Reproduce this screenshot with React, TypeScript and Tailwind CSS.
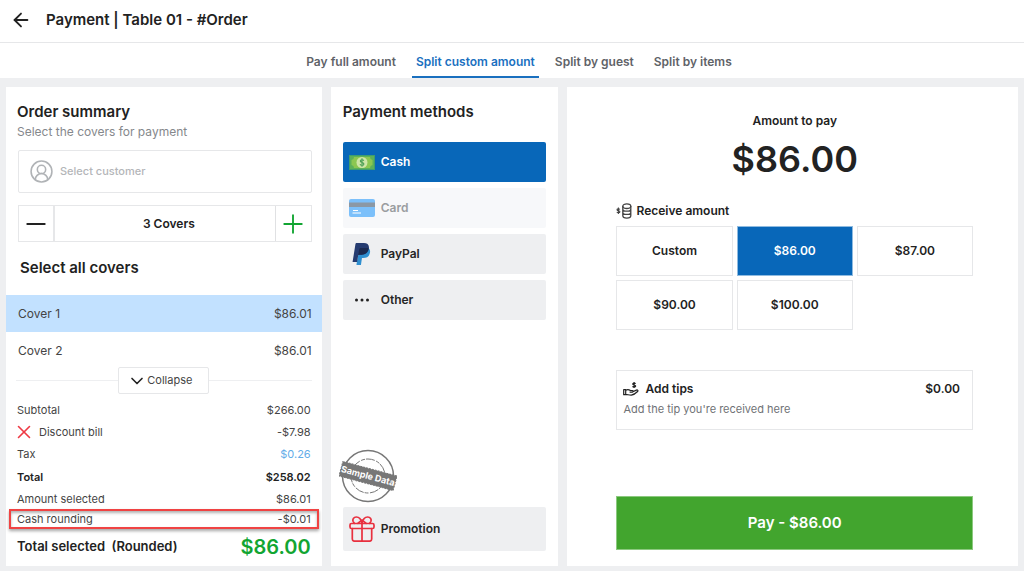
import { useState } from "react";
import type { ReactNode } from "react";
import { ArrowLeft, ChevronDown, CircleUserRound, Minus, Plus, X } from "lucide-react";
import clsx from "clsx";

const TABS = ["Pay full amount", "Split custom amount", "Split by guest", "Split by items"];

const COVERS = [
  { name: "Cover 1", amount: "$86.01" },
  { name: "Cover 2", amount: "$86.01" },
];

const AMOUNTS = ["Custom", "$86.00", "$87.00", "$90.00", "$100.00"];

const CashIcon = () => (
  <svg width="26" height="15" viewBox="0 0 26 15" aria-hidden="true">
    <rect width="26" height="15" fill="#3f9d6d" />
    <rect x="1" y="1" width="24" height="13" fill="#5cb05a" />
    <path d="M5 2h16a3 3 0 0 0 2.500 3v5a3 3 0 0 0-2.500 3H5a3 3 0 0 0-2.500-3V5A3 3 0 0 0 5 2z" fill="#8cc751" />
    <circle cx="13" cy="7.500" r="5.500" fill="#cfe6a8" />
    <path d="M14.800 5.700c-.3-.7-1-1-1.800-1-1 0-1.700.5-1.700 1.300 0 1.900 3.600 1 3.600 2.900 0 .9-.8 1.400-1.900 1.400-1 0-1.700-.4-2-1.200M13 3.300v8.400" fill="none" stroke="#4a9e55" strokeWidth="1.100" />
  </svg>
);

const CardIcon = () => (
  <svg width="26" height="18" viewBox="0 0 26 18" aria-hidden="true">
    <rect width="26" height="18" rx="2" fill="#7cc0fa" />
    <rect y="3.500" width="26" height="4.500" fill="#8b98a5" />
    <path d="M4 11.500h5M3.500 14h8.500" stroke="#fff" strokeWidth="1.200" />
  </svg>
);

const PayPalIcon = () => (
  <svg width="19" height="22" viewBox="0 0 20 23" aria-hidden="true">
    <path d="M17.600 5.500c1.300 1.100 1.700 2.800 1.300 4.800-.8 4-3.600 5.500-7.200 5.500h-1.200L9.400 23H4.700l.5-3.500L8 6z" fill="#2f8fd0" />
    <path d="M3.600 1.200C3.700.5 4.200 0 5 0h7.500c3.800 0 6 2 5.200 6-.8 4.200-3.700 6.200-7.600 6.200H7.600c-.6 0-1 .4-1.100 1L5.400 20H.6z" fill="#253b70" />
    <path d="M17.600 5.500c-.7 4.600-3.600 6.700-7.500 6.700H7.600c-.5 0-.8.2-1 .6l1-6.300c.1-.8.7-1.400 1.500-1.400h5.700c1 0 2 .1 2.800.4z" fill="#1b2a50" />
  </svg>
);

const GiftIcon = () => (
  <svg width="26" height="26" viewBox="0 0 26 26" fill="none" stroke="#e8303f" strokeWidth="1.700" strokeLinejoin="round" strokeLinecap="round" aria-hidden="true">
    <rect x="1" y="7.500" width="24" height="5" rx="1.500" />
    <path d="M3.300 12.500V23a2.200 2.200 0 0 0 2.200 2.200h15a2.200 2.200 0 0 0 2.200-2.200V12.500M13 7.500v17.500" />
    <path d="M13 7.300C12.300 3.800 10 1 7.300 1 4.800 1 3 3.300 4.200 5.600L5.300 7.300M13 7.300C13.700 3.800 16 1 18.700 1c2.500 0 4.300 2.300 3.100 4.600l-1.100 1.700M8.800 7.300 13 4l4.200 3.300" />
  </svg>
);

const DotsIcon = () => (
  <svg width="16" height="4" viewBox="0 0 16 4" fill="#222" aria-hidden="true">
    <circle cx="2.500" cy="2" r="1.500" />
    <circle cx="8" cy="2" r="1.500" />
    <circle cx="13.500" cy="2" r="1.500" />
  </svg>
);

const CoinsIcon = () => (
  <svg width="16" height="16" viewBox="0 0 16 16" fill="none" stroke="#444" strokeWidth="1.300" aria-hidden="true">
    <path d="M3.800 6.500C3.500 6 3 5.800 2.400 5.800c-.8 0-1.400.3-1.400.9 0 1.400 2.900.7 2.900 2.100 0 .7-.6 1-1.500 1-.7 0-1.300-.3-1.500-.9M2.400 4.600v6.400" strokeWidth="1.100" />
    <ellipse cx="10.800" cy="3.200" rx="4" ry="2.300" />
    <path d="M6.800 3v9.500c0 1.400 1.800 2.600 4 2.600s4-1.200 4-2.600V3M6.800 6c0 1.200 1.800 2.200 4 2.200s4-1 4-2.200M6.800 9.200c0 1.200 1.800 2.200 4 2.200s4-1 4-2.200" />
  </svg>
);

const TipIcon = () => (
  <svg width="16" height="14" viewBox="0 0 16 14" fill="none" stroke="#222" strokeWidth="1.200" strokeLinejoin="round" aria-hidden="true">
    <path d="M12.600 1.800c-.3-.5-.8-.7-1.500-.7-.8 0-1.400.3-1.400.9 0 1.300 3 .7 3 2 0 .7-.6 1-1.600 1-.7 0-1.300-.3-1.500-.8M11.100 0v6" />
    <path d="M.7 7.700h2v5h-2zM2.700 8.200c1.700-1 3.200-.8 4.700.3h2c1 0 1 1.600 0 1.600H6.600M9.800 9.800l3.600-1.700c1.200-.5 2 .6 1.200 1.400-1.800 1.800-3.900 3.400-6.300 3.600-2 .1-3.700-.6-5.600-.7" />
  </svg>
);

const Stamp = () => (
  <svg width="58" height="54" viewBox="0 0 58 54" role="img" aria-label="Sample Data">
    <g fill="none" stroke="#777">
      <circle cx="29" cy="27" r="25.500" strokeWidth="1.500" />
      <circle cx="29" cy="27" r="17" strokeDasharray="9 1.500 4 1" />
    </g>
    <g transform="rotate(15 29 27)">
      <rect x="1" y="19.500" width="56" height="15" fill="#777" />
      <rect x="1" y="19.500" width="56" height="15" fill="none" stroke="#777" strokeDasharray="2 1" />
      <text x="29" y="30" textAnchor="middle" fontSize="9" fontWeight="700" fill="#fff">
        Sample Data
      </text>
    </g>
  </svg>
);

type MethodButtonProps = {
  icon: ReactNode;
  label: string;
  active?: boolean;
  disabled?: boolean;
  onClick: () => void;
};

const MethodButton = ({ icon, label, active, disabled, onClick }: MethodButtonProps) => (
  <button
    type="button"
    disabled={disabled}
    onClick={onClick}
    className={clsx(
      "flex h-10 items-center gap-1.5 rounded-xs px-1.5 text-xs font-semibold",
      active && "bg-[#0867b9] text-white",
      disabled && "bg-[#f7f8fa] text-[#9a9da0]",
      !active && !disabled && "bg-[#eeeff1] text-[#262626]",
    )}
  >
    <span className="flex w-6.5 justify-center">{icon}</span>
    {label}
  </button>
);

type SummaryRowProps = {
  label: ReactNode;
  value: string;
  className?: string;
  valueClassName?: string;
};

const SummaryRow = ({ label, value, className, valueClassName }: SummaryRowProps) => (
  <div className={clsx("flex items-center justify-between px-[11px]", className)}>
    <dt className="flex items-center">{label}</dt>
    <dd className={valueClassName}>{value}</dd>
  </div>
);

const OrderSummary = () => {
  const [covers, setCovers] = useState(3);
  const [selected, setSelected] = useState("Cover 1");
  const [open, setOpen] = useState(true);

  return (
    <section className="flex flex-col bg-white pt-[15px]">
      <h2 className="px-[11px] text-[15px] leading-5 font-semibold">Order summary</h2>
      <p className="px-[11px] text-xs leading-5 text-[#85888c]">Select the covers for payment</p>

      <label className="mt-2 mr-2.5 ml-3 flex h-[43px] items-center gap-1.5 rounded-xs border border-[#e6e7e9] px-2.5 text-[#b0b3b6]">
        <CircleUserRound size={25} strokeWidth={1.5} />
        <input
          type="text"
          aria-label="Select customer"
          placeholder="Select customer"
          className="min-w-0 flex-1 text-[11px] font-medium text-[#333] outline-none placeholder:text-[#b4b6b9]"
        />
      </label>

      <div className="mt-3 mr-2.5 ml-3 flex h-[37px] border border-[#e6e7e9]">
        <button
          type="button"
          aria-label="Remove cover"
          onClick={() => setCovers(Math.max(1, covers - 1))}
          className="flex w-9 items-center justify-center border-r-2 border-[#e6e7e9]"
        >
          <Minus size={30} strokeWidth={1.5} />
        </button>
        <output className="flex flex-1 items-center justify-center pl-2 text-xs font-semibold">{covers} Covers</output>
        <button
          type="button"
          aria-label="Add cover"
          onClick={() => setCovers(covers + 1)}
          className="flex w-9 items-center justify-center border-l border-[#e0e1e3] text-[#12a532]"
        >
          <Plus size={30} strokeWidth={1.5} />
        </button>
      </div>

      <h3 className="mt-4 mb-[17px] px-3.5 text-[15px] leading-5 font-semibold">Select all covers</h3>

      {COVERS.map((cover) => (
        <button
          key={cover.name}
          type="button"
          aria-pressed={selected === cover.name}
          onClick={() => setSelected(cover.name)}
          className={clsx(
            "flex h-[37px] items-center justify-between pr-2.5 pl-3 text-xs text-[#444]",
            selected === cover.name && "bg-[#c2e1ff]",
          )}
        >
          <span>{cover.name}</span>
          <span>{cover.amount}</span>
        </button>
      ))}

      <div className="-mt-0.5 flex items-center px-2.5">
        <span className="h-px flex-1 bg-[#eeeff1]" />
        <button
          type="button"
          aria-expanded={open}
          onClick={() => setOpen(!open)}
          className="flex h-[27px] items-center rounded-xs border border-[#e6e7e9] pr-4 pl-2 text-[11px] text-[#444]"
        >
          <ChevronDown size={20} strokeWidth={2} className="text-[#222]" />
          Collapse
        </button>
        <span className="h-px flex-1 bg-[#eeeff1]" />
      </div>

      <dl className="mt-[5px] text-[11px] text-[#444]">
        {open && (
          <>
            <SummaryRow className="h-5.5" label="Subtotal" value="$266.00" />
            <SummaryRow
              className="h-5.5"
              label={
                <>
                  <X size={22} strokeWidth={1.75} className="mr-1 -ml-1 text-[#ee3a45]" />
                  Discount bill
                </>
              }
              value="-$7.98"
            />
            <SummaryRow className="h-5.5" label="Tax" value="$0.26" valueClassName="text-[#63ace8]" />
            <SummaryRow className="h-6 font-semibold text-[#222]" label="Total" value="$258.02" />
            <SummaryRow className="h-5" label="Amount selected" value="$86.01" />
          </>
        )}
        <div className="mx-[3px] border-2 border-[#f04343] shadow-[0_2px_3px_rgba(0,0,0,0.35),inset_0_2px_3px_rgba(0,0,0,0.3)]">
          <div className="-mx-[5px]">
            <SummaryRow className="h-4" label="Cash rounding" value="-$0.01" />
          </div>
        </div>
        <SummaryRow
          className="h-9 text-[13px] font-semibold text-[#222]"
          label="Total selected&nbsp; (Rounded)"
          value="$86.00"
          valueClassName="text-xl text-[#12a532]"
        />
      </dl>
    </section>
  );
};

const PaymentMethods = () => {
  const [method, setMethod] = useState("Cash");

  return (
    <section className="flex flex-col bg-white px-3 py-[15px]">
      <h2 className="mb-5 text-[15px] leading-5 font-semibold">Payment methods</h2>
      <div className="flex flex-col gap-1.5">
        <MethodButton icon={<CashIcon />} label="Cash" active={method === "Cash"} onClick={() => setMethod("Cash")} />
        <MethodButton icon={<CardIcon />} label="Card" disabled onClick={() => setMethod("Card")} />
        <MethodButton icon={<PayPalIcon />} label="PayPal" active={method === "PayPal"} onClick={() => setMethod("PayPal")} />
        <MethodButton icon={<DotsIcon />} label="Other" active={method === "Other"} onClick={() => setMethod("Other")} />
      </div>
      <div className="mt-auto mb-1 -ml-1">
        <Stamp />
      </div>
      <button
        type="button"
        className="flex h-11 items-center gap-1.5 rounded-xs bg-[#eeeff1] px-1.5 text-xs font-semibold text-[#262626]"
      >
        <GiftIcon />
        Promotion
      </button>
    </section>
  );
};

const AmountPanel = () => {
  const [amount, setAmount] = useState("$86.00");

  return (
    <section className="flex flex-col bg-white pt-6 pr-[45px] pb-4 pl-[49px]">
      <p className="text-center text-xs leading-5 font-semibold">Amount to pay</p>
      <p className="mt-1 text-center text-4xl leading-12 font-semibold">$86.00</p>

      <h2 className="mt-[18px] mb-[5px] flex h-5 items-center gap-1 text-xs font-semibold">
        <CoinsIcon />
        Receive amount
      </h2>
      <div className="grid grid-cols-3 gap-1">
        {AMOUNTS.map((value) => (
          <button
            key={value}
            type="button"
            aria-pressed={value === amount}
            onClick={() => setAmount(value)}
            className={clsx(
              "h-[50px] border text-xs font-semibold",
              value === amount ? "border-[#8fbbe0] bg-[#0867b9] text-white" : "border-[#e6e7e9]",
            )}
          >
            {value}
          </button>
        ))}
      </div>

      <button
        type="button"
        className="mt-10 flex h-15 flex-col items-start gap-0.5 border border-[#e6e7e9] pt-2 pr-3 pl-1.5"
      >
        <span className="flex w-full items-center gap-1.5 text-xs leading-5 font-semibold">
          <TipIcon />
          Add tips
          <span className="ml-auto">$0.00</span>
        </span>
        <span className="text-[11px] leading-4 text-[#6f7276]">Add the tip you're received here</span>
      </button>

      <button type="button" className="mt-auto h-13.5 border border-[#8cc97f] bg-[#42a52e] text-[15px] font-semibold text-white">
        Pay - $86.00
      </button>
    </section>
  );
};

const App = () => {
  const [tab, setTab] = useState("Split custom amount");

  return (
    <div className="flex min-h-screen flex-col bg-[#eeeff1] font-['Inter',sans-serif] text-[#222]">
      <header className="flex h-[43px] items-center gap-3.5 border-b border-[#e6e7e9] bg-white px-2.5 pb-0.5">
        <button type="button" aria-label="Back">
          <ArrowLeft size={22} strokeWidth={2} />
        </button>
        <h1 className="text-[15px] font-semibold">Payment | Table 01 - #Order</h1>
      </header>

      <nav className="flex h-[35px] justify-center gap-3 bg-white pl-3.5 text-xs font-semibold text-[#5f6368]">
        {TABS.map((name) => (
          <button
            key={name}
            type="button"
            aria-current={tab === name ? "page" : undefined}
            onClick={() => setTab(name)}
            className={clsx("border-b-2 px-1 pt-1", tab === name ? "border-[#1a70bf] text-[#1a70bf]" : "border-transparent")}
          >
            {name}
          </button>
        ))}
      </nav>

      <main className="grid flex-1 grid-cols-[316fr_228fr_451fr] gap-[9px] px-1.5 pt-[9px] pb-[5px]">
        <OrderSummary />
        <PaymentMethods />
        <AmountPanel />
      </main>
    </div>
  );
};

export default App;
